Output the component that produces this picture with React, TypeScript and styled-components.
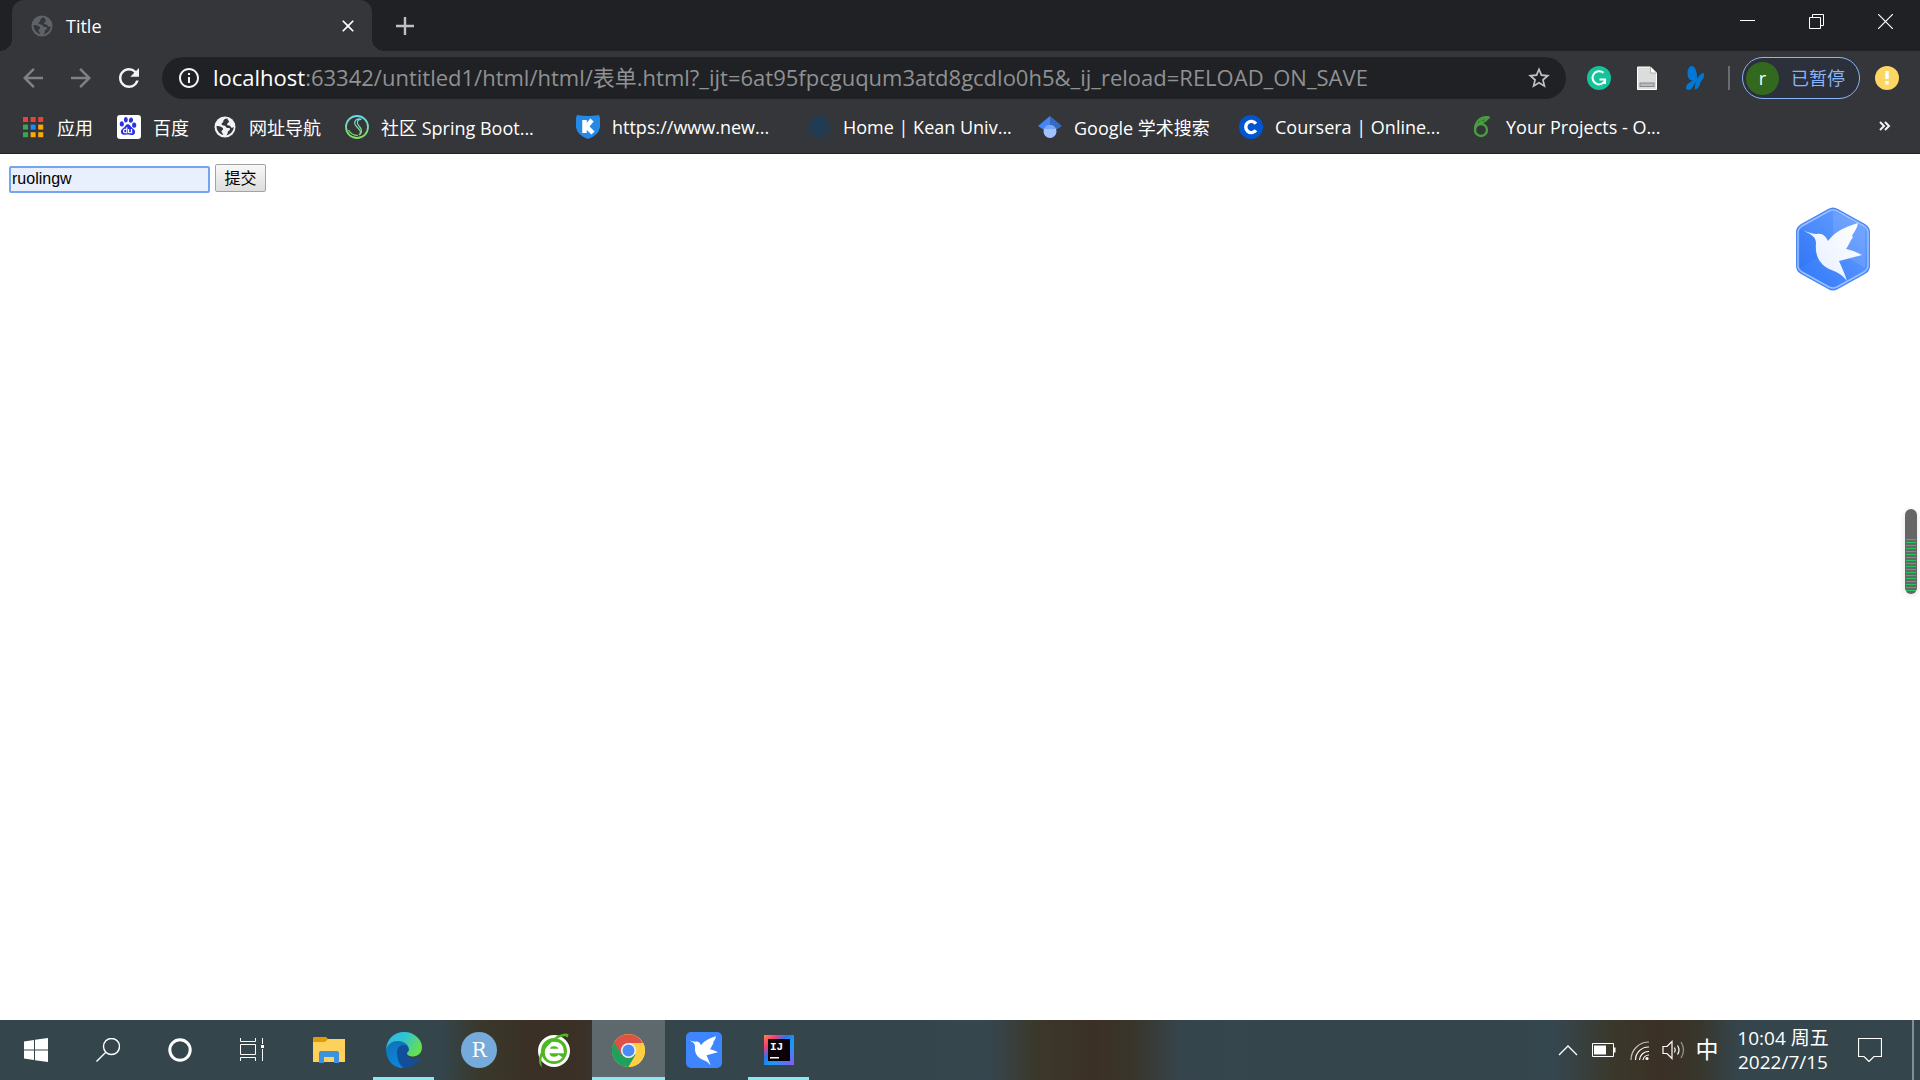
import React from "react";
import styled, { createGlobalStyle } from "styled-components";
import { MdArrowBack, MdArrowForward, MdRefresh, MdInfoOutline, MdStarBorder, MdClose } from "react-icons/md";
import { SiBaidu } from "react-icons/si";

const UI_FONT = '"Open Sans", "Noto Sans CJK SC", sans-serif';

const GlobalStyle = createGlobalStyle`
  *, *::before, *::after { box-sizing: border-box; }
  body { margin: 0; background: #fff; }
  button { font: inherit; color: inherit; background: none; border: 0; padding: 0; }
  svg { display: block; flex: none; }
`;

const Desktop = styled.div`
  display: flex;
  flex-direction: column;
  min-height: 100vh;
  font-family: ${UI_FONT};
  font-size: 18px;
  line-height: 24px;
  color: #fff;
`;

/* ---------- browser frame ---------- */

const TabStrip = styled.header`
  display: flex;
  height: 51px;
  padding-left: 12px;
  background: #202124;
`;

const Tab = styled.div`
  position: relative;
  display: flex;
  align-items: center;
  gap: 12px;
  width: 360px;
  padding: 0 16px 0 18px;
  border-radius: 12px 12px 0 0;
  background: #35363a;
  &::before,
  &::after {
    content: "";
    position: absolute;
    bottom: 0;
    width: 12px;
    height: 12px;
  }
  &::before {
    left: -12px;
    background: radial-gradient(circle at 0 0, transparent 12px, #35363a 12px);
  }
  &::after {
    right: -12px;
    background: radial-gradient(circle at 100% 0, transparent 12px, #35363a 12px);
  }
`;

const TabTitle = styled.span`
  flex: 1;
`;

const IconButton = styled.button<{ $w?: number; $color?: string }>`
  display: flex;
  align-items: center;
  justify-content: center;
  flex: none;
  width: ${(p) => p.$w ?? 48}px;
  height: 100%;
  color: ${(p) => p.$color ?? "#fff"};
`;

const NewTab = styled(IconButton)`
  margin-left: 12px;
`;

const WindowControls = styled.div`
  display: flex;
  height: 42px;
  margin-left: auto;
`;

const Toolbar = styled.div`
  display: flex;
  align-items: center;
  height: 54px;
  padding: 0 21px 0 9px;
  background: #35363a;
`;

const Omnibox = styled.div`
  display: flex;
  align-items: center;
  flex: 1;
  gap: 12px;
  height: 42px;
  margin: 0 9px;
  padding: 0 15px;
  border-radius: 21px;
  background: #202124;
  color: #f1f3f4;
`;

const Url = styled.div`
  flex: 1;
  padding-bottom: 2px;
  font-size: 22px;
  white-space: nowrap;
  color: #8f9193;
  strong {
    font-weight: 400;
    color: #fff;
  }
`;

const Divider = styled.span`
  width: 2px;
  height: 24px;
  margin: 0 12px 0 9px;
  background: #6b6c70;
`;

const Profile = styled.button`
  display: flex;
  align-items: center;
  gap: 12px;
  height: 42px;
  margin-right: 15px;
  padding: 0 14px 0 3px;
  border: 1px solid #8ab4f8;
  border-radius: 21px;
  background: #2c303a;
  color: #8ab4f8;
  font-size: 18px;
`;

const Avatar = styled.span`
  display: flex;
  align-items: center;
  justify-content: center;
  width: 33px;
  height: 33px;
  border-radius: 50%;
  background: #33691e;
  color: #fff;
  font-size: 18px;
`;

const BookmarkBar = styled.nav`
  display: flex;
  align-items: center;
  gap: 24px;
  height: 49px;
  padding: 0 24px 4px 21px;
  border-bottom: 1px solid #202124;
  background: #35363a;
`;

const Bookmark = styled.a`
  display: flex;
  align-items: center;
  gap: 12px;
  color: #fff;
  text-decoration: none;
  white-space: nowrap;
`;

const BookmarkLabel = styled.span<{ $w?: number }>`
  width: ${(p) => (p.$w ? `${p.$w}px` : "auto")};
`;

const Cjk = styled.span`
  font-family: "Noto Sans CJK SC", sans-serif;
`;

const More = styled.button`
  width: 24px;
  height: 24px;
  margin-left: auto;
`;

/* ---------- page ---------- */

const Page = styled.main`
  position: relative;
  flex: 1;
  padding: 10px 9px;
  background: #fff;
`;

const Form = styled.form`
  display: flex;
  align-items: flex-end;
  gap: 5px;
  font-family: "Liberation Sans", "Noto Sans CJK SC", sans-serif;
  font-size: 16px;
  color: #000;
`;

const NameInput = styled.input`
  width: 201px;
  height: 27px;
  padding: 0 1px 1px;
  border: 2px solid #75a5ee;
  border-radius: 2px;
  outline: 0;
  background: #e8f0fe;
  font: inherit;
  color: #000;
`;

const Submit = styled.button`
  width: 51px;
  height: 28px;
  margin-bottom: 1px;
  padding-top: 2px;
  border: 1px solid #a3a3a3;
  border-radius: 2px;
  background: linear-gradient(#f8f8f8, #dddddd);
  line-height: 24px;
`;

const FloatingBird = styled.div`
  position: absolute;
  top: 53px;
  right: 48px;
`;

const Meter = styled.div`
  position: absolute;
  top: 355px;
  right: 3px;
  width: 12px;
  height: 85px;
  padding: 30px 1px 3px;
  border-radius: 6px;
  background: #666;
  box-shadow: 0 2px 6px rgba(0, 0, 0, 0.12);
`;

const MeterBars = styled.div`
  height: 100%;
  background: repeating-linear-gradient(#22c55e 0 1px, #666 1px 3px);
`;

/* ---------- taskbar ---------- */

const Taskbar = styled.footer`
  display: flex;
  height: 60px;
  background: linear-gradient(
    90deg,
    #34464b 0,
    #34464b 21%,
    #34454b 23%,
    #39382b 25%,
    #3a3026 27.5%,
    #3a3026 30%,
    #34464b 35%,
    #34464b 48%,
    #36464e 51.5%,
    #3b382a 54%,
    #3c3026 57%,
    #39352a 59%,
    #36454d 61.5%,
    #34464b 66%,
    #34464b 78%,
    #35464e 81%,
    #3a382b 84%,
    #3b3026 86.5%,
    #38362b 88.5%,
    #35454c 90.5%,
    #34464b 94%
  );
`;

const AppButtons = styled.div`
  display: flex;
  gap: 2px;
  margin-left: 4px;
`;

const AppButton = styled.button<{ $state?: "open" | "active" }>`
  position: relative;
  display: flex;
  align-items: center;
  justify-content: center;
  width: 73px;
  height: 60px;
  background: ${(p) => (p.$state === "active" ? "#5d696c" : "transparent")};
  &::after {
    content: "";
    position: absolute;
    bottom: 0;
    left: ${(p) => (p.$state === "active" ? 0 : 6)}px;
    right: ${(p) => (p.$state === "active" ? 0 : 6)}px;
    height: ${(p) => (p.$state ? 3 : 0)}px;
    background: #8ce8ec;
  }
`;

const Tray = styled.div`
  display: flex;
  align-items: center;
  margin-left: auto;
`;

const Ime = styled.button`
  width: 34px;
  padding-bottom: 2px;
  font-size: 23px;
`;

const Clock = styled.div`
  width: 110px;
  padding: 0 0 2px 8px;
  font-size: 19px;
  text-align: center;
  white-space: nowrap;
`;

const ShowDesktop = styled.button`
  width: 8px;
  height: 60px;
  margin-left: 6px;
  border-left: 2px solid #82908f;
`;

/* ---------- drawings ---------- */

const Globe = ({ color }: { color: string }) => (
  <svg width="24" height="24" viewBox="0 0 24 24">
    <circle cx="12" cy="12" r="10.5" fill={color} />
    <path d="M14.5 3.4c-3 .2-4.400 1.500-4.200 3.200.1 1.200-1.800 1-1.700 2.600.2 1.700 3.300.8 4.200 2.400.5 1.300 1.500 1.600 2.700 1.500 2.200-.1 1.700 2.300.1 2.900-1.300.6-.4 2.700-2.200 4.500 4-.9 7.100-4.200 7.400-8.400-1.400 1-3 .6-3.300-.7-.3-1.500-3.400-.3-3.500-2.100 0-1.500 2-1.400 2-2.900 0-1-1.700-1.300-1.500-3zM3.500 11c2.300-.4 5.700.6 6.500 2.300.8 1.900-1.500 1.800-1.500 3.400 0 1.200 2 1.400 1.600 3.400-3.800-1-6.600-4.700-6.600-9.100z" fill="#35363a" />
  </svg>
);

const AppsGrid = () => {
  const colors = ["#ea4335", "#ea4335", "#ea4335", "#34a853", "#1a8cff", "#fbaa05", "#34a853", "#fbaa05", "#fbaa05"];
  return (
    <svg width="24" height="24" viewBox="0 0 24 24">
      {colors.map((c, i) => (
        <rect key={i} x={2 + (i % 3) * 7.6} y={2 + Math.floor(i / 3) * 7.6} width="5" height="5" fill={c} />
      ))}
    </svg>
  );
};

const BaiduIcon = () => (
  <svg width="24" height="24" viewBox="0 0 24 24">
    <rect width="24" height="24" rx="3" fill="#fff" />
    <SiBaidu x="2" y="2" width="20" height="20" color="#2932e1" />
  </svg>
);

const SpringIcon = () => (
  <svg width="24" height="24" viewBox="0 0 24 24" fill="none">
    <defs>
      <linearGradient id="spring" x1="0" y1="0" x2="0" y2="1">
        <stop offset="0" stopColor="#69dce4" />
        <stop offset="1" stopColor="#83dc58" />
      </linearGradient>
    </defs>
    <g stroke="url(#spring)">
      <circle cx="12" cy="12" r="11" strokeWidth="1.800" />
      <path d="M15.500 4C10 3 8 8 11.500 11.500s5.500 6 2.500 8.500M16.500 4.500c-5-.5-5 4-2.500 6.500s3.500 6 1 8.500M3.500 15c2 3.500 6 5.500 9.500 5.500" strokeWidth="1.200" />
    </g>
  </svg>
);

const ShieldK = () => (
  <svg width="24" height="24" viewBox="0 0 24 24">
    <path d="M1 0q11 2 22 0l1 3v9q-1 8-12 12Q1 20 0 12V3z" fill="#2589e8" />
    <path d="M8.500 5v13M16 5l-5.500 6.500L17 18" stroke="#fff" strokeWidth="4.500" fill="none" />
  </svg>
);

const KeanSeal = () => (
  <svg width="24" height="24" viewBox="0 0 24 24" fill="none" stroke="#173f64">
    <circle cx="12" cy="12" r="10.500" strokeWidth="2.500" strokeDasharray="2 1" />
    <circle cx="12" cy="12" r="7" fill="#233b51" />
    <path d="M7 9l5 8 5-8-5 2zM12 5v12M7 7h10" />
  </svg>
);

const Scholar = () => (
  <svg width="24" height="24" viewBox="0 0 24 24">
    <path d="M12 1L0 11l6 4h6z" fill="#4285f4" />
    <path d="M12 1l12 10-6 4h-6z" fill="#356ac3" />
    <circle cx="12" cy="16.500" r="6.500" fill="#a0c3ff" />
    <path d="M6 14a6.500 6.500 0 0 1 12 0" fill="#76a7fa" />
  </svg>
);

const Coursera = () => (
  <svg width="24" height="24" viewBox="0 0 24 24">
    <circle cx="12" cy="12" r="12" fill="#0056d2" />
    <path d="M16.900 8.700a5.600 5.600 0 1 0 0 6.600" fill="none" stroke="#fff" strokeWidth="3.400" />
  </svg>
);

const Overleaf = () => (
  <svg width="24" height="24" viewBox="0 0 24 24" fill="none" stroke="#47a141">
    <circle cx="11" cy="15" r="6" strokeWidth="2.300" />
    <path d="M5 15C4.500 9 8 4 13 2.500c2.500-.7 4.500-.5 6.500-.2-3 1-3 4-6 4.500-3.500.3-6 2-7.500 5" strokeWidth="2" />
    <path d="M9 6l8-3" strokeWidth="1.500" />
  </svg>
);

const Grammarly = () => (
  <svg width="24" height="24" viewBox="0 0 24 24" fill="none" stroke="#fff" strokeWidth="2">
    <circle cx="12" cy="12" r="12" fill="#15c39a" stroke="none" />
    <path d="M16.500 6.800a6.600 6.600 0 1 0 2 6.700M12.500 13.500H18V18" />
  </svg>
);

const DocIcon = () => (
  <svg width="24" height="24" viewBox="0 0 24 24">
    <path d="M2.500 1h13l6 6v16.500h-19z" fill="#dcdcdc" stroke="#fff" />
    <path d="M15.500 1v6h6" fill="#fff" stroke="#999" strokeWidth=".7" />
    <rect x="5" y="17" width="14" height="3.500" fill="#bbb" stroke="#888" />
  </svg>
);

const Butterfly = () => (
  <svg width="24" height="24" viewBox="0 0 24 24" fill="#0078d7">
    <path d="M8.500 0C4.500 1 3.500 8 5.500 12c1 2 3 2.500 4.500 3-3 .5-7 3-7 7.500 1 2 5 2 6.500-1L14 14C14.500 8 13 0 8.500 0z" />
    <path d="M20.800 7c-3 0-6 4-7.500 8-1 3-1.800 6-1.300 8.500 3-.5 5-3.500 5.500-7.500 2-2 4.500-6 3.300-9z" />
  </svg>
);

const Warning = () => (
  <svg width="24" height="24" viewBox="0 0 24 24">
    <circle cx="12" cy="12" r="12" fill="#fdd663" />
    <path d="M10.300 5h3.400v8h-3.400zM10.300 15h3.400v3.400h-3.400z" fill="#fff" />
  </svg>
);

const BIRD = "M3 12C8 13 11 15 16 15c6-1 9 3 11 7C32 15 40 9 57 4c-1 6-4 9-6 13l1 1c-3 4-4 8-7 12 6 1 10 3 16 6-8 2-15 4-23 6 3 7 6 13 8 20C40 54 35 53 28 50 17 44 14 35 15 24c0-6-5-9-12-12z";

const HexBird = () => (
  <svg width="78" height="84" viewBox="0 0 78 84">
    <defs>
      <linearGradient id="hex" x1="0" y1="1" x2="1" y2="0">
        <stop offset="0" stopColor="#2e78fb" />
        <stop offset="1" stopColor="#6ba1ff" />
      </linearGradient>
      <linearGradient id="wing" x1="0" y1="1" x2="1" y2="0">
        <stop offset="0" stopColor="#e4edff" />
        <stop offset="1" stopColor="#fff" />
      </linearGradient>
    </defs>
    <path d="M34 2q5-3 10 0l27 15q5 3 5 8v34q0 5-5 8L44 82q-5 3-10 0L7 67q-5-3-5-8V25q0-5 5-8z" fill="#4a88f8" />
    <path d="M35 4q4-2 8 0l27 15q4 3 4 6v34q0 3-4 6L43 80q-4 2-8 0L8 65q-4-3-4-6V25q0-3 4-6z" fill="url(#hex)" stroke="#9bc0ff" strokeWidth="1.500" />
    <path d="M39 42V4l32 17v40z" fill="#fff" opacity=".1" />
    <path d="M39 42L6 61V22z" fill="#003acc" opacity=".08" />
    <path d={BIRD} transform="translate(7 12)" fill="url(#wing)" />
  </svg>
);

const SquareBird = () => (
  <svg width="36" height="36" viewBox="0 0 36 36">
    <rect width="36" height="36" rx="5" fill="#3f85ff" />
    <path d={BIRD} transform="translate(1.500 2.200) scale(.5)" fill="#fff" />
  </svg>
);

const WindowsLogo = () => (
  <svg width="24" height="24" viewBox="0 0 24 24" fill="#fff">
    <path d="M0 3.500L10 2v9.400H0zM11 1.800L24 0v11.400H11zM0 12.400h10V22L0 20.600zM11 12.400h13V24l-13-1.800z" />
  </svg>
);

const SearchIcon = () => (
  <svg width="24" height="24" viewBox="0 0 24 24" fill="none" stroke="#fff" strokeWidth="1.400">
    <circle cx="15.500" cy="8.500" r="8" />
    <path d="M9.800 14.200L.5 23.500" />
  </svg>
);

const CortanaIcon = () => (
  <svg width="24" height="24" viewBox="0 0 24 24" fill="none">
    <circle cx="12" cy="12" r="10.200" stroke="#fff" strokeWidth="3" />
  </svg>
);

const TaskViewIcon = () => (
  <svg width="24" height="24" viewBox="0 0 24 24" fill="none" stroke="#fff" strokeWidth="1">
    <path d="M.5 0v3.500h15V0M.5 6.500h15v10H.5zM.5 23v-3.500h15V23M22.500 0v6M22.500 11v12" />
    <path d="M21 7h3v3h-3z" fill="#fff" stroke="none" />
  </svg>
);

const FolderIcon = () => (
  <svg width="32" height="28" viewBox="0 0 32 28">
    <path d="M0 2q0-1 1-1h12l3 3v3H0z" fill="#e19b05" />
    <path d="M0 6h12l3-3h17v23H0z" fill="#fdd15b" />
    <path d="M6 27V17q0-2 2-2h16q2 0 2 2v10h-5v-6H11v6z" fill="#3b93dd" />
  </svg>
);

const EdgeIcon = () => (
  <svg width="36" height="36" viewBox="0 0 36 36">
    <defs>
      <linearGradient id="edgeTop" x1="0" y1="0" x2="1" y2=".5">
        <stop offset="0" stopColor="#2fb4ef" />
        <stop offset=".5" stopColor="#30c5d2" />
        <stop offset="1" stopColor="#65df52" />
      </linearGradient>
      <linearGradient id="edgeLeft" x1="0" y1="0" x2="0" y2="1">
        <stop offset="0" stopColor="#1173b8" />
        <stop offset="1" stopColor="#0a86df" />
      </linearGradient>
    </defs>
    <path d="M0 17C2 11 7 9 12 9c7 0 11 4 11 9L17 36C7 36 0 28 0 17z" fill="url(#edgeLeft)" />
    <path d="M11 20c0-4 3-7 7-7 4 .5 5 3 4.500 5.500-1 1.500-1.500 2.500-1.500 4 0 2.500 3 4.500 7.500 4.500 3 0 4.500-1 5.500-.5C31 32 25 36 18 36c-5-3-7-9-7-16z" fill="#114f9b" />
    <path d="M0 17C1 7 8 0 18 0c11 0 18 8 18 15 0 6-4 9.500-9 9.500-4 0-6-1.500-6-3 0-1 2-1.500 2-4C23 13 18 9 12 9 6 9 2 12 0 17z" fill="url(#edgeTop)" />
  </svg>
);

const RIcon = () => (
  <svg width="36" height="36" viewBox="0 0 36 36">
    <circle cx="18" cy="18" r="18" fill="#75aadb" />
    <text x="18" y="25" textAnchor="middle" fontFamily="DejaVu Serif, serif" fontSize="20" fill="#fff">R</text>
  </svg>
);

const GreenE = () => (
  <svg width="34" height="36" viewBox="0 0 34 36">
    <circle cx="17" cy="19" r="14.500" fill="#4eb824" stroke="#fff" strokeWidth="3" />
    <path d="M23.500 24q-2 3-6.500 3-7 0-7-7.500t7-7.500 7.500 7H11" fill="none" stroke="#fff" strokeWidth="4.500" />
    <path d="M5 35C-1 31 2 18 13 9 20 3 28 0 31 2c1 1 0 3-1 4 0-3-5-2-11 1C9 13 2 24 5 35z" fill="#4eb824" />
  </svg>
);

const ChromeIcon = () => (
  <svg width="33" height="33" viewBox="0 0 48 48">
    <circle cx="24" cy="24" r="24" fill="#ffce44" />
    <path d="M24 24L3.200 12A24 24 0 0 0 24 48l10.400-18z" fill="#1fa15d" />
    <path d="M3.200 12a24 24 0 0 1 41.600 1H24L13.600 30z" fill="#de5246" />
    <path d="M34.400 30L24 48a24 24 0 0 0 21.500-35H24z" fill="#ffce44" />
    <circle cx="24" cy="24" r="11" fill="#f1f1f1" />
    <circle cx="24" cy="24" r="8.700" fill="#4c8bf5" />
  </svg>
);

const IdeaIcon = () => (
  <svg width="30" height="30" viewBox="0 0 30 30">
    <defs>
      <linearGradient id="idea" x1="0" y1="0" x2="1" y2="1">
        <stop offset="0" stopColor="#fc8a3c" />
        <stop offset=".22" stopColor="#f73b77" />
        <stop offset=".4" stopColor="#2678f2" />
        <stop offset=".6" stopColor="#149cf8" />
        <stop offset="1" stopColor="#8b57ee" />
      </linearGradient>
    </defs>
    <rect width="30" height="30" fill="url(#idea)" />
    <rect x="4" y="4" width="22" height="22" fill="#0b0209" />
    <text x="6" y="15" fontFamily="Liberation Mono, monospace" fontWeight="700" fontSize="11" fill="#fff">IJ</text>
    <rect x="6" y="22" width="9" height="1.500" fill="#fff" />
  </svg>
);

/* ---------- screen ---------- */

const bookmarks: { icon: React.ReactNode; label: React.ReactNode; width?: number }[] = [
  { icon: <AppsGrid />, label: <Cjk>应用</Cjk> },
  { icon: <BaiduIcon />, label: <Cjk>百度</Cjk> },
  { icon: <Globe color="#f1f3f4" />, label: <Cjk>网址导航</Cjk> },
  { icon: <SpringIcon />, label: <><Cjk>社区</Cjk> Spring Boot...</>, width: 171 },
  { icon: <ShieldK />, label: "https://www.new...", width: 171 },
  { icon: <KeanSeal />, label: "Home | Kean Univ...", width: 171 },
  { icon: <Scholar />, label: <>Google <Cjk>学术搜索</Cjk></>, width: 141 },
  { icon: <Coursera />, label: "Coursera | Online...", width: 171 },
  { icon: <Overleaf />, label: "Your Projects - O...", width: 171 },
];

const apps: { name: string; icon: React.ReactNode; state?: "open" | "active" }[] = [
  { name: "File Explorer", icon: <FolderIcon /> },
  { name: "Edge", icon: <EdgeIcon />, state: "open" },
  { name: "RStudio", icon: <RIcon /> },
  { name: "360 Browser", icon: <GreenE /> },
  { name: "Chrome", icon: <ChromeIcon />, state: "active" },
  { name: "Xunlei", icon: <SquareBird /> },
  { name: "IntelliJ IDEA", icon: <IdeaIcon />, state: "open" },
];

export default function App() {
  return (
    <Desktop>
      <GlobalStyle />
      <TabStrip>
        <Tab>
          <Globe color="#5f6368" />
          <TabTitle>Title</TabTitle>
          <IconButton $w={16} aria-label="Close tab"><MdClose size={20} /></IconButton>
        </Tab>
        <NewTab $w={42} $color="#bdc1c6" aria-label="New tab">
          <svg width="18" height="18" viewBox="0 0 18 18"><path d="M9 0v18M0 9h18" stroke="currentColor" strokeWidth="2.400" /></svg>
        </NewTab>
        <WindowControls>
          <IconButton $w={69} aria-label="Minimize">
            <svg width="15" height="15" viewBox="0 0 15 15"><path d="M0 6.500h15" stroke="#fff" /></svg>
          </IconButton>
          <IconButton $w={69} aria-label="Restore">
            <svg width="15" height="15" viewBox="0 0 15 15"><path d="M.5 3.500h11v11H.5zM3.500 3V.5h11v11H12" fill="none" stroke="#fff" /></svg>
          </IconButton>
          <IconButton $w={69} aria-label="Close window">
            <svg width="15" height="15" viewBox="0 0 15 15"><path d="M0 0l15 15M15 0L0 15" stroke="#fff" strokeWidth="1.200" /></svg>
          </IconButton>
        </WindowControls>
      </TabStrip>

      <Toolbar>
        <IconButton $color="#808184" aria-label="Back"><MdArrowBack size={30} /></IconButton>
        <IconButton $color="#808184" aria-label="Forward"><MdArrowForward size={30} /></IconButton>
        <IconButton $color="#f1f3f4" aria-label="Reload"><MdRefresh size={30} /></IconButton>
        <Omnibox>
          <MdInfoOutline size={24} />
          <Url>
            <strong>localhost</strong>:63342/untitled1/html/html/表单.html?_ijt=6at95fpcguqum3atd8gcdlo0h5&amp;_ij_reload=RELOAD_ON_SAVE
          </Url>
          <IconButton $w={24} $color="#bdc1c6" aria-label="Bookmark this page"><MdStarBorder size={26} /></IconButton>
        </Omnibox>
        <IconButton aria-label="Grammarly"><Grammarly /></IconButton>
        <IconButton aria-label="Documents"><DocIcon /></IconButton>
        <IconButton aria-label="Butterfly"><Butterfly /></IconButton>
        <Divider />
        <Profile>
          <Avatar>r</Avatar>
          已暂停
        </Profile>
        <IconButton $w={24} aria-label="Update"><Warning /></IconButton>
      </Toolbar>

      <BookmarkBar>
        {bookmarks.map((b, i) => (
          <Bookmark key={i} href="#">
            {b.icon}
            <BookmarkLabel $w={b.width}>{b.label}</BookmarkLabel>
          </Bookmark>
        ))}
        <More aria-label="More bookmarks">
          <svg width="24" height="24" viewBox="0 0 24 24" fill="none" stroke="#f1f3f4" strokeWidth="2">
            <path d="M8 7l4 4-4 4M13 7l4 4-4 4" />
          </svg>
        </More>
      </BookmarkBar>

      <Page>
        <Form onSubmit={(e) => e.preventDefault()}>
          <NameInput type="text" aria-label="Name" defaultValue="ruolingw" />
          <Submit type="submit">提交</Submit>
        </Form>
        <FloatingBird><HexBird /></FloatingBird>
        <Meter><MeterBars /></Meter>
      </Page>

      <Taskbar>
        <IconButton $w={72} aria-label="Start"><WindowsLogo /></IconButton>
        <IconButton $w={72} aria-label="Search"><SearchIcon /></IconButton>
        <IconButton $w={72} aria-label="Cortana"><CortanaIcon /></IconButton>
        <IconButton $w={72} aria-label="Task view"><TaskViewIcon /></IconButton>
        <AppButtons>
          {apps.map((a) => (
            <AppButton key={a.name} $state={a.state} aria-label={a.name}>{a.icon}</AppButton>
          ))}
        </AppButtons>
        <Tray>
          <IconButton $w={36} aria-label="Show hidden icons">
            <svg width="20" height="12" viewBox="0 0 20 12"><path d="M1 11l9-9 9 9" fill="none" stroke="#fff" strokeWidth="1.300" /></svg>
          </IconButton>
          <IconButton $w={36} aria-label="Battery">
            <svg width="24" height="14" viewBox="0 0 24 14">
              <path d="M.5.500h21v13H.5z" fill="none" stroke="#fff" />
              <path d="M2 2.500h12v9H2zM22 4.500h1.500v5H22z" fill="#fff" />
            </svg>
          </IconButton>
          <IconButton $w={36} aria-label="Network">
            <svg width="20" height="24" viewBox="0 0 20 24" fill="none" stroke="#fff" strokeWidth="1.200">
              <path d="M1 22A18 18 0 0 1 19 4" opacity=".7" />
              <path d="M5.500 22A13 13 0 0 1 19 9M9.500 22a9 9 0 0 1 9.500-8.500M13 22a6 6 0 0 1 6-5" />
              <circle cx="17" cy="20.500" r="1.600" fill="#fff" stroke="none" />
            </svg>
          </IconButton>
          <IconButton $w={32} aria-label="Volume">
            <svg width="24" height="20" viewBox="0 0 24 20" fill="none" stroke="#fff" strokeWidth="1.200">
              <path d="M1 6.500h4l5-5v17l-5-5H1zM12.500 7.500q1.500 2.500 0 5M15.500 5.500q3 4.500 0 9" />
              <path d="M19 2q5 8 0 16" opacity=".5" />
            </svg>
          </IconButton>
          <Ime>中</Ime>
          <Clock>
            10:04 <Cjk>周五</Cjk>
            <br />
            2022/7/15
          </Clock>
          <IconButton $w={72} aria-label="Notifications">
            <svg width="24" height="24" viewBox="0 0 24 24"><path d="M.5.500h23v18H16l-5 5-5-5H.5z" fill="none" stroke="#fff" strokeWidth="1.200" /></svg>
          </IconButton>
          <ShowDesktop aria-label="Show desktop" />
        </Tray>
      </Taskbar>
    </Desktop>
  );
}
